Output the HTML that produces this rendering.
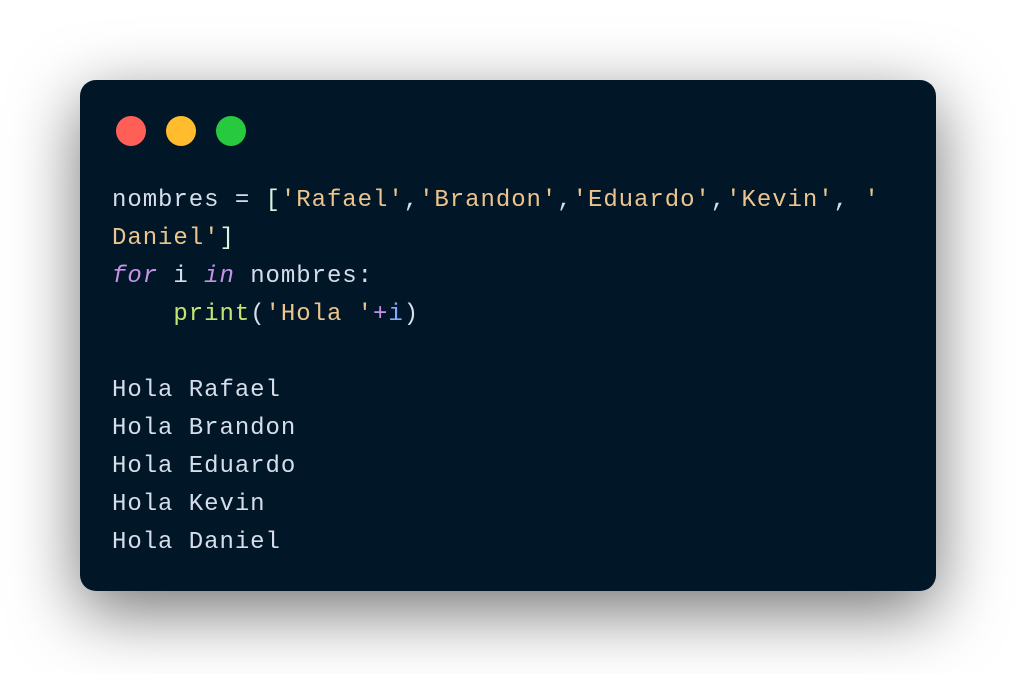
<!DOCTYPE html>
<html><head><style>
body{margin:0;width:1016px;height:674px;background:#fff;position:relative;overflow:hidden}
.win{position:absolute;left:80px;top:80px;width:856px;height:511px;background:#011627;border-radius:16px;box-shadow:0 20px 68px rgba(0,0,0,0.55)}
.d{position:absolute;top:36px;width:30px;height:30px;border-radius:50%}
pre{position:absolute;left:32px;top:102px;margin:0;font-family:"Liberation Mono",monospace;font-size:24px;letter-spacing:0.95px;line-height:38px;color:#d6deeb}
.s{color:#ecc48d}.k{color:#c792ea;font-style:italic}.f{color:#c5e478}.p{color:#c792ea}.v{color:#82aaff}.b{color:#d9f5dd}
</style></head><body>
<div class="win">
<div class="d" style="left:36px;background:#ff5f56"></div>
<div class="d" style="left:86px;background:#ffbd2e"></div>
<div class="d" style="left:136px;background:#27c93f"></div>
<pre>nombres = <span class="b">[</span><span class="s">'Rafael'</span>,<span class="s">'Brandon'</span>,<span class="s">'Eduardo'</span>,<span class="s">'Kevin'</span>, <span class="s">'</span>
<span class="s">Daniel'</span><span class="b">]</span>
<span class="k">for</span> i <span class="k">in</span> nombres:
    <span class="f">print</span>(<span class="s">'Hola '</span><span class="p">+</span><span class="v">i</span>)

Hola Rafael
Hola Brandon
Hola Eduardo
Hola Kevin
Hola Daniel</pre>
</div>
</body></html>
